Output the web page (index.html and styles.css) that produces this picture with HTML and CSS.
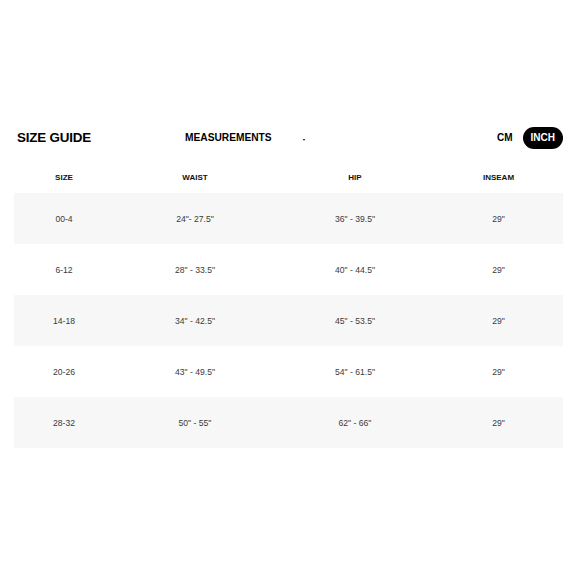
FILE: index.html
```html
<!DOCTYPE html>
<html>
<head>
<meta charset="utf-8">
<link rel="stylesheet" href="styles.css">
</head>
<body>
<div class="page">
  <div class="header">
    <div class="title">SIZE GUIDE</div>
    <div class="measure">MEASUREMENTS<span class="caret"></span></div>
    <div class="units">
      <span class="cm">CM</span>
      <span class="pill">INCH</span>
    </div>
  </div>
  <div class="table">
    <div class="row head">
      <div>SIZE</div><div>WAIST</div><div>HIP</div><div>INSEAM</div>
    </div>
    <div class="row shade">
      <div>00-4</div><div>24"- 27.5"</div><div>36" - 39.5"</div><div>29"</div>
    </div>
    <div class="row">
      <div>6-12</div><div>28" - 33.5"</div><div>40" - 44.5"</div><div>29"</div>
    </div>
    <div class="row shade">
      <div>14-18</div><div>34" - 42.5"</div><div>45" - 53.5"</div><div>29"</div>
    </div>
    <div class="row">
      <div>20-26</div><div>43" - 49.5"</div><div>54" - 61.5"</div><div>29"</div>
    </div>
    <div class="row shade">
      <div>28-32</div><div>50" - 55"</div><div>62" - 66"</div><div>29"</div>
    </div>
  </div>
</div>
</body>
</html>
```

FILE: styles.css
```css
html, body {
  margin: 0;
  padding: 0;
  background: #fff;
}
body {
  font-family: "Liberation Sans", Arial, sans-serif;
  color: #000;
}
.page {
  width: 549px;
  padding: 127px 0 0 14px;
}
.header {
  display: flex;
  align-items: center;
  height: 22px;
  padding-left: 3px;
}
.title {
  width: 168px;
  font-size: 13.4px;
  font-weight: bold;
  letter-spacing: -0.2px;
  line-height: 1;
  padding-top: 0;
}
.measure {
  display: flex;
  align-items: center;
  font-size: 10.2px;
  font-weight: bold;
  line-height: 1;
  padding-top: 1px;
}
.caret {
  display: inline-block;
  width: 0;
  height: 0;
  margin-left: 31px;
  margin-top: 4px;
  border-left: 1.5px solid transparent;
  border-right: 1.5px solid transparent;
  border-top: 2.5px solid #000;
}
.units {
  margin-left: auto;
  display: flex;
  align-items: center;
  gap: 10px;
  font-size: 10px;
  font-weight: bold;
}
.cm {
  line-height: 1;
}
.pill {
  background: #000;
  color: #fff;
  height: 22px;
  line-height: 22px;
  padding: 0 8px;
  border-radius: 11px;
}
.table {
  margin-top: 12px;
}
.row {
  display: grid;
  grid-template-columns: 100px 162px 158px 129px;
  height: 51px;
  align-items: center;
  font-size: 8.6px;
  color: #3a3a3a;
}
.row > div {
  text-align: center;
}
.row.shade {
  background: #f7f7f7;
}
.row.head {
  height: 32px;
  font-size: 8px;
  font-weight: bold;
  color: #111;
}
```
